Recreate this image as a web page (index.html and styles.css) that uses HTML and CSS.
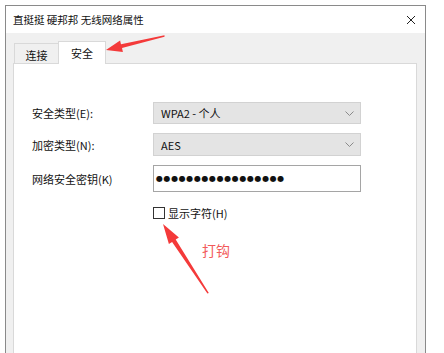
FILE: index.html
```html
<!DOCTYPE html>
<html lang="zh">
<head>
  <meta charset="UTF-8">
  <title>无线网络属性</title>
  <link rel="stylesheet" href="styles.css">
</head>
<body>
  <div class="window">
    <div class="titlebar">
      <span class="title">直挺挺 硬邦邦 无线网络属性</span>
      <svg class="close" width="10" height="10" viewBox="0 0 10 10">
        <path d="M1 1 L9 9 M9 1 L1 9" stroke="#222" stroke-width="1" fill="none"/>
      </svg>
    </div>

    <div class="dialog">
      <div class="tabs">
        <div class="tab">连接</div>
        <div class="tab active">安全</div>
      </div>

      <div class="pane">
        <div class="form">
          <label>安全类型(E):</label>
          <div class="combo">
            <span>WPA2 - 个人</span>
            <svg width="9" height="5" viewBox="0 0 9 5"><path d="M0.5 0.5 L4.5 4.5 L8.5 0.5" stroke="#8a8a8a" fill="none"/></svg>
          </div>

          <label>加密类型(N):</label>
          <div class="combo">
            <span>AES</span>
            <svg width="9" height="5" viewBox="0 0 9 5"><path d="M0.5 0.5 L4.5 4.5 L8.5 0.5" stroke="#8a8a8a" fill="none"/></svg>
          </div>

          <label>网络安全密钥(K)</label>
          <div class="password">●●●●●●●●●●●●●●●●●</div>
        </div>

        <div class="check">
          <span class="box"></span>
          <span>显示字符(H)</span>
        </div>
      </div>
    </div>
  </div>

  <div class="note">打钩</div>

  <svg class="arrows" width="444" height="353" viewBox="0 0 444 353">
    <polygon points="164.5,35.3 121,44.3 120.1,40.4 106,50 122.9,52 122,48.1 164.5,36.7" fill="#f43a3a"/>
    <polygon points="208.8,293 175.7,239.5 178.9,237.4 163,224 168.9,244 172.1,241.9 207.4,293.4" fill="#f43a3a"/>
  </svg>
</body>
</html>
```

FILE: styles.css
```css
* {
  box-sizing: border-box;
}

html, body {
  margin: 0;
  padding: 0;
  height: 100%;
  overflow: hidden;
  background-color: #fff;
  font-family: "Noto Sans CJK SC", "Noto Sans", sans-serif;
  font-size: 11px;
  color: #111;
}

body {
  position: relative;
}

.window {
  margin: 5px 0 0 5px;
  width: 421px;
  height: 348px;
  border: 1px solid #8a8a8a;
  border-bottom: none;
  display: flex;
  flex-direction: column;
}

.titlebar {
  height: 27px;
  background-color: #fff;
  display: flex;
  align-items: center;
  justify-content: space-between;
  padding: 0 9px 0 7px;
}

.title {
  font-size: 10.5px;
  line-height: 14px;
}

.dialog {
  flex: 1;
  background-color: #f0f0f0;
  padding: 8px 8px 0 7px;
  display: flex;
  flex-direction: column;
}

.tabs {
  display: flex;
  align-items: flex-end;
  height: 22px;
  padding-left: 1px;
  position: relative;
  z-index: 1;
}

.tab {
  width: 44px;
  height: 20px;
  border: 1px solid #d9d9d9;
  border-bottom: none;
  border-right: none;
  background-color: #f0f0f0;
  display: flex;
  align-items: center;
  justify-content: center;
  padding-top: 3px;
}

.tab.active {
  width: 48px;
  height: 23px;
  margin-bottom: -1px;
  border-right: 1px solid #d9d9d9;
  background-color: #fff;
  padding-top: 0;
  padding-bottom: 1px;
}

.pane {
  flex: 1;
  background-color: #fff;
  border: 1px solid #d9d9d9;
  border-bottom: none;
  padding: 38px 0 0 18px;
}

.form {
  display: grid;
  grid-template-columns: 121px 208px;
  grid-template-rows: 22px 23px 27px;
  row-gap: 9px;
  align-items: center;
}

.form label {
  line-height: 14px;
}

.combo {
  height: 100%;
  background-color: #e4e4e4;
  border: 1px solid #d2d2d2;
  display: flex;
  align-items: center;
  justify-content: space-between;
  padding: 0 6px 0 7px;
}

.password {
  height: 100%;
  background-color: #fff;
  border: 1px solid #a5a5a5;
  display: flex;
  align-items: center;
  padding-left: 2px;
  font-family: "DejaVu Sans", sans-serif;
  font-size: 8px;
  letter-spacing: 0.6px;
}

.check {
  display: flex;
  align-items: center;
  gap: 3px;
  margin: 14px 0 0 121px;
  height: 13px;
}

.box {
  width: 12px;
  height: 12px;
  border: 1px solid #333;
  background-color: #fff;
}

.note {
  position: absolute;
  left: 202px;
  top: 241px;
  font-size: 14px;
  line-height: 18px;
  color: #f25a5a;
}

.arrows {
  position: absolute;
  left: 0;
  top: 0;
  pointer-events: none;
}
```
